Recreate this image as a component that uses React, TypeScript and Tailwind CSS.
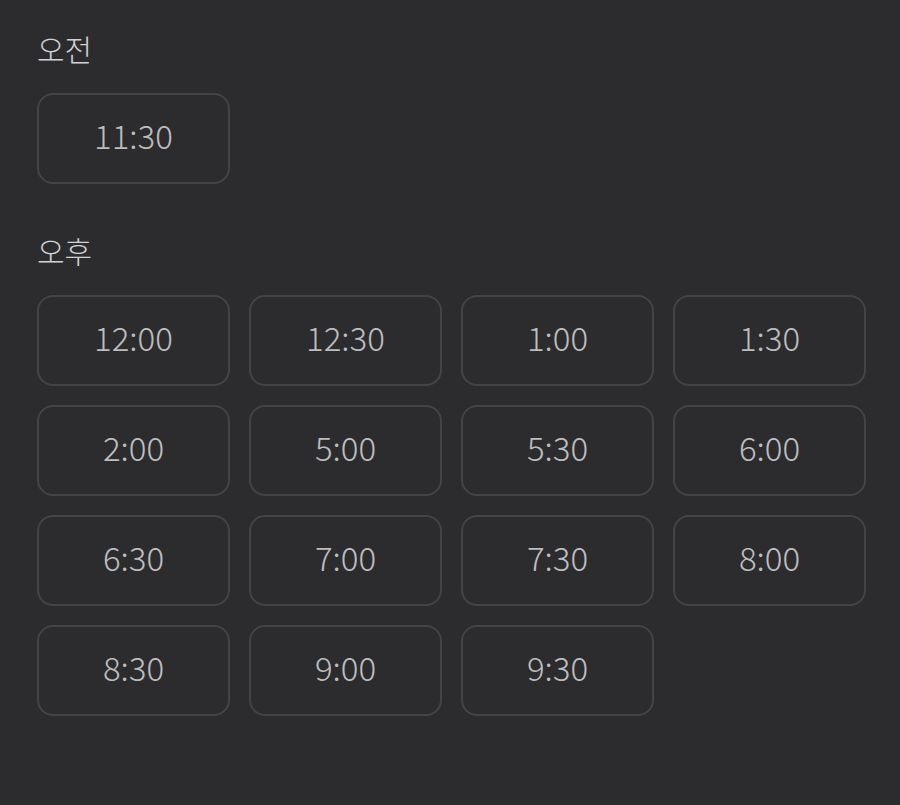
const am = ['11:30'];
const pm = ['12:00', '12:30', '1:00', '1:30', '2:00', '5:00', '5:30', '6:00', '6:30', '7:00', '7:30', '8:00', '8:30', '9:00', '9:30'];

function Slot(props: { time: string }) {
  return (
    <button className="h-[91px] w-[193px] rounded-[16px] border-2 border-[#444447] bg-[#2c2c2e] pb-[5px] text-[33px] font-light text-[#bdbdbf]">
      {props.time}
    </button>
  );
}

export default function App() {
  return (
    <div
      className="min-h-[805px] w-[900px] bg-[#2c2c2e] pl-[37px] pt-[28px]"
      style={{ fontFamily: '"Noto Sans CJK KR", "Noto Sans", sans-serif' }}
    >
      <h2 className="mb-[25px] text-[30px] font-light leading-[40px] text-[#d2d2d4]">오전</h2>
      <div className="grid grid-cols-[repeat(4,193px)] gap-x-[19px] gap-y-[19px]">
        {am.map((t) => (
          <Slot key={t} time={t} />
        ))}
      </div>
      <h2 className="mb-[25px] mt-[46px] text-[30px] font-light leading-[40px] text-[#d2d2d4]">오후</h2>
      <div className="grid grid-cols-[repeat(4,193px)] gap-x-[19px] gap-y-[19px]">
        {pm.map((t) => (
          <Slot key={t} time={t} />
        ))}
      </div>
    </div>
  );
}
